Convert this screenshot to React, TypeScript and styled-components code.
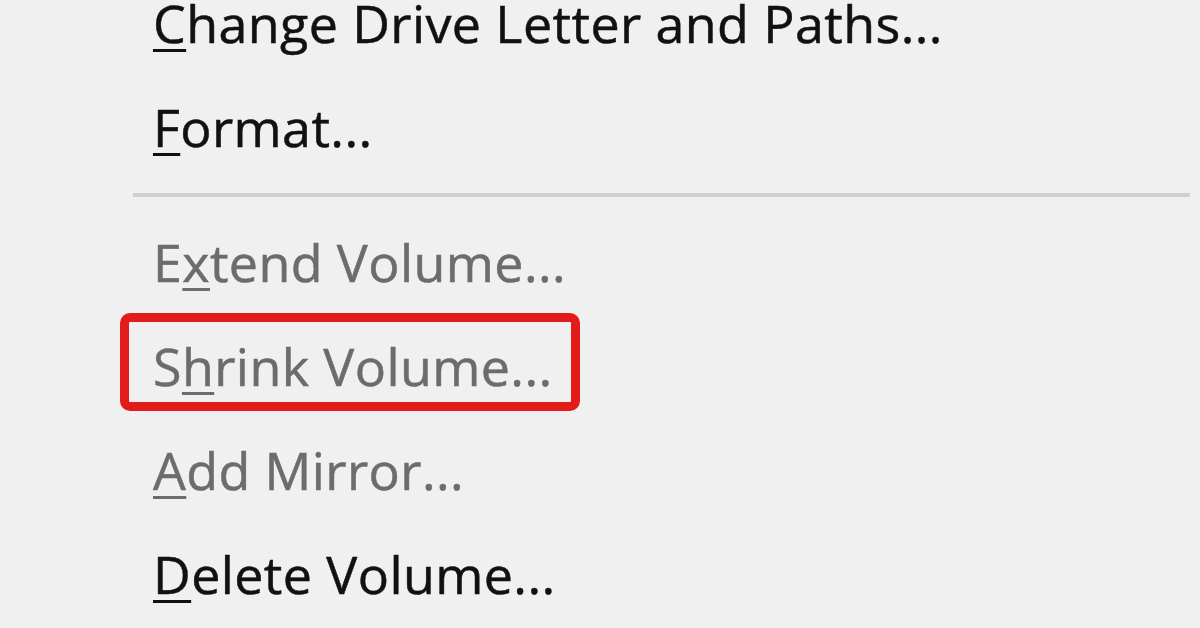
import React from "react";
import styled, { createGlobalStyle } from "styled-components";

const Global = createGlobalStyle`
  html, body { margin: 0; padding: 0; }
  body {
    width: 1200px;
    height: 628px;
    overflow: hidden;
    background: #f0f0f0;
    font-family: "Open Sans", "Noto Sans", "Liberation Sans", sans-serif;
  }
`;

const Menu = styled.ul`
  list-style: none;
  margin: -29px 0 0 0;
  padding: 0 10px 0 0;
  display: flex;
  flex-direction: column;
  width: 1200px;
  box-sizing: border-box;
`;

const Item = styled.li<{ $disabled?: boolean }>`
  position: relative;
  height: 104px;
  line-height: 104px;
  padding-left: 153px;
  font-size: 52px;
  letter-spacing: 0.4px;
  white-space: nowrap;
  color: ${(p) => (p.$disabled ? "#6c6c6c" : "#111111")};
  -webkit-text-stroke: 0.5px currentColor;
`;

const Key = styled.span`
  text-decoration: underline;
  text-decoration-thickness: 3px;
  text-underline-offset: 6px;
`;

const Separator = styled.li`
  height: 31px;
  display: flex;
  align-items: flex-start;
  padding-left: 133px;
  &::after {
    content: "";
    flex: 1;
    margin-top: 14px;
    height: 4px;
    background: #cfcfcf;
  }
`;

const Highlight = styled.span`
  position: absolute;
  left: 120px;
  top: -1px;
  width: 460px;
  height: 98px;
  box-sizing: border-box;
  border: 9px solid #e31b1b;
  border-radius: 10px;
  pointer-events: none;
`;

type Entry =
  | { kind: "sep" }
  | { kind: "item"; before: string; key: string; after: string; disabled?: boolean; marked?: boolean };

const entries: Entry[] = [
  { kind: "item", before: "", key: "C", after: "hange Drive Letter and Paths..." },
  { kind: "item", before: "", key: "F", after: "ormat..." },
  { kind: "sep" },
  { kind: "item", before: "E", key: "x", after: "tend Volume...", disabled: true },
  { kind: "item", before: "S", key: "h", after: "rink Volume...", disabled: true, marked: true },
  { kind: "item", before: "", key: "A", after: "dd Mirror...", disabled: true },
  { kind: "item", before: "", key: "D", after: "elete Volume..." },
];

export default function App() {
  return (
    <>
      <Global />
      <Menu>
        {entries.map((e, i) =>
          e.kind === "sep" ? (
            <Separator key={i} />
          ) : (
            <Item key={i} $disabled={e.disabled}>
              {e.before}
              <Key>{e.key}</Key>
              {e.after}
              {e.marked && <Highlight />}
            </Item>
          )
        )}
      </Menu>
    </>
  );
}
